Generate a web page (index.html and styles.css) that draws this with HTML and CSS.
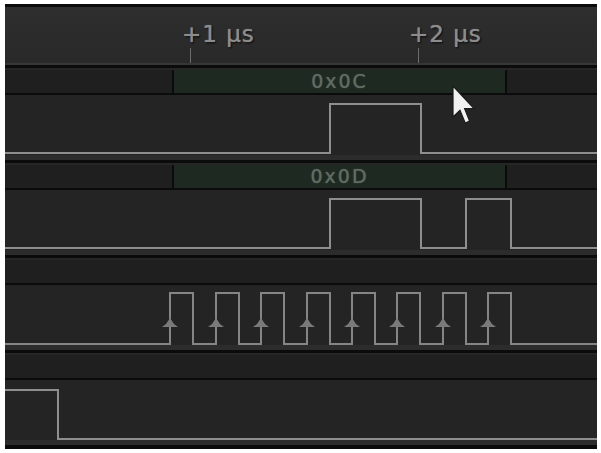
FILE: index.html
```html
<!DOCTYPE html>
<html lang="en">
<head>
    <meta charset="UTF-8">
    <title>Logic analyzer</title>
    <link rel="stylesheet" href="styles.css">
</head>
<body>

    <div id="panel">
        <div class="ruler">
            <span class="tick-label" style="left:177px">+1 μs</span>
            <span class="tick" style="left:185px"></span>
            <span class="tick-label" style="left:404px">+2 μs</span>
            <span class="tick" style="left:413px"></span>
        </div>

        <div class="channel">
            <div class="decode">
                <div class="pad"></div>
                <div class="frame">0x0C</div>
                <div class="rest"></div>
            </div>
            <div class="signal">
                <svg width="592" height="60" viewBox="0 0 592 60">
                    <path class="wave" d="M0 58 H325 V9 H416 V58 H592"/>
                </svg>
            </div>
        </div>

        <div class="channel">
            <div class="decode">
                <div class="pad"></div>
                <div class="frame">0x0D</div>
                <div class="rest"></div>
            </div>
            <div class="signal">
                <svg width="592" height="60" viewBox="0 0 592 60">
                    <path class="wave" d="M0 58 H325 V9 H416 V58 H461 V9 H506 V58 H592"/>
                </svg>
            </div>
        </div>

        <div class="channel">
            <div class="decode"></div>
            <div class="signal">
                <svg width="592" height="60" viewBox="0 0 592 60" id="clock"></svg>
            </div>
        </div>

        <div class="channel">
            <div class="decode"></div>
            <div class="signal">
                <svg width="592" height="60" viewBox="0 0 592 60">
                    <path class="wave" d="M0 10 H53 V59 H592"/>
                </svg>
            </div>
        </div>

        <svg class="pointer" width="24" height="40" viewBox="0 0 12 20">
            <path d="M0.5 0.5 V16 L4 12.6 L6.6 19 L8.8 18 L6.3 11.8 H11 Z"/>
        </svg>
    </div>

    <script>
        // clock channel: 8 pulses, an edge marker on every rising edge
        var oClock=document.getElementById("clock");
        var aRise=[165,211,256,302,347,392,438,483];
        var d="M0 59";
        var marks="";
        for(var i=0;i<aRise.length;i++){
            var x=aRise[i];
            d+=" H"+x+" V8 H"+(x+23)+" V59";
            marks+='<polygon class="edge" points="'+(x-8)+',42 '+(x+8)+',42 '+(x+4)+',39 '+x+',33 '+(x-4)+',39"/>';
        }
        d+=" H592";
        oClock.innerHTML='<path class="wave clk" d="'+d+'"/>'+marks;
    </script>
</body>
</html>
```

FILE: styles.css
```css
*{
    margin: 0;
    padding: 0;
}
body{
    background: #fff;
    font-family: "DejaVu Sans", sans-serif;
}
#panel{
    position: relative;
    width: 592px;
    height: 445px;
    margin: 4px 0 0 5px;
    background: #0b0b0b;
    border-top: 3px solid #0b0b0b;
    box-sizing: border-box;
    overflow: hidden;
}
.ruler{
    position: relative;
    height: 56px;
    background: linear-gradient(#2e2e2e, #292929);
    border-bottom: 2px solid #373737;
}
.tick-label{
    position: absolute;
    top: 15px;
    font-size: 23px;
    line-height: 24px;
    letter-spacing: 1px;
    color: #8c8c8c;
    text-shadow: 0 0 1px #8c8c8c, 1px 1px 2px #000;
    white-space: nowrap;
}
.tick{
    position: absolute;
    top: 41px;
    width: 1px;
    height: 15px;
    background: #6c6c6c;
}
.channel{
    height: 95px;
    padding-top: 3px;
    box-sizing: border-box;
}
.decode{
    display: flex;
    height: 25px;
    background: #1f1f1f;
    border-top: 2px solid #262626;
    box-sizing: border-box;
    margin-bottom: 2px;
}
.pad{
    width: 167px;
}
.frame{
    width: 331px;
    border-left: 2px solid #0b0b0b;
    border-right: 2px solid #0b0b0b;
    background: #1e2a21;
    text-align: center;
    font-size: 19px;
    line-height: 23px;
    letter-spacing: 2px;
    color: #5f6b62;
    text-shadow: 0 0 1px #5f6b62;
}
.rest{
    flex: 1;
}
.signal{
    height: 60px;
    background: #242424;
    border-bottom: 5px solid #2c2c2c;
}
.signal svg{
    display: block;
}
.wave{
    fill: none;
    stroke: #8e8e8e;
    stroke-width: 2;
}
.clk{
    stroke: #858585;
}
.edge{
    fill: #7a7a7a;
}
.pointer{
    position: absolute;
    left: 447px;
    top: 78px;
}
.pointer path{
    fill: #f2f2f2;
    stroke: #1a1a1a;
    stroke-width: 0.6;
}
```
